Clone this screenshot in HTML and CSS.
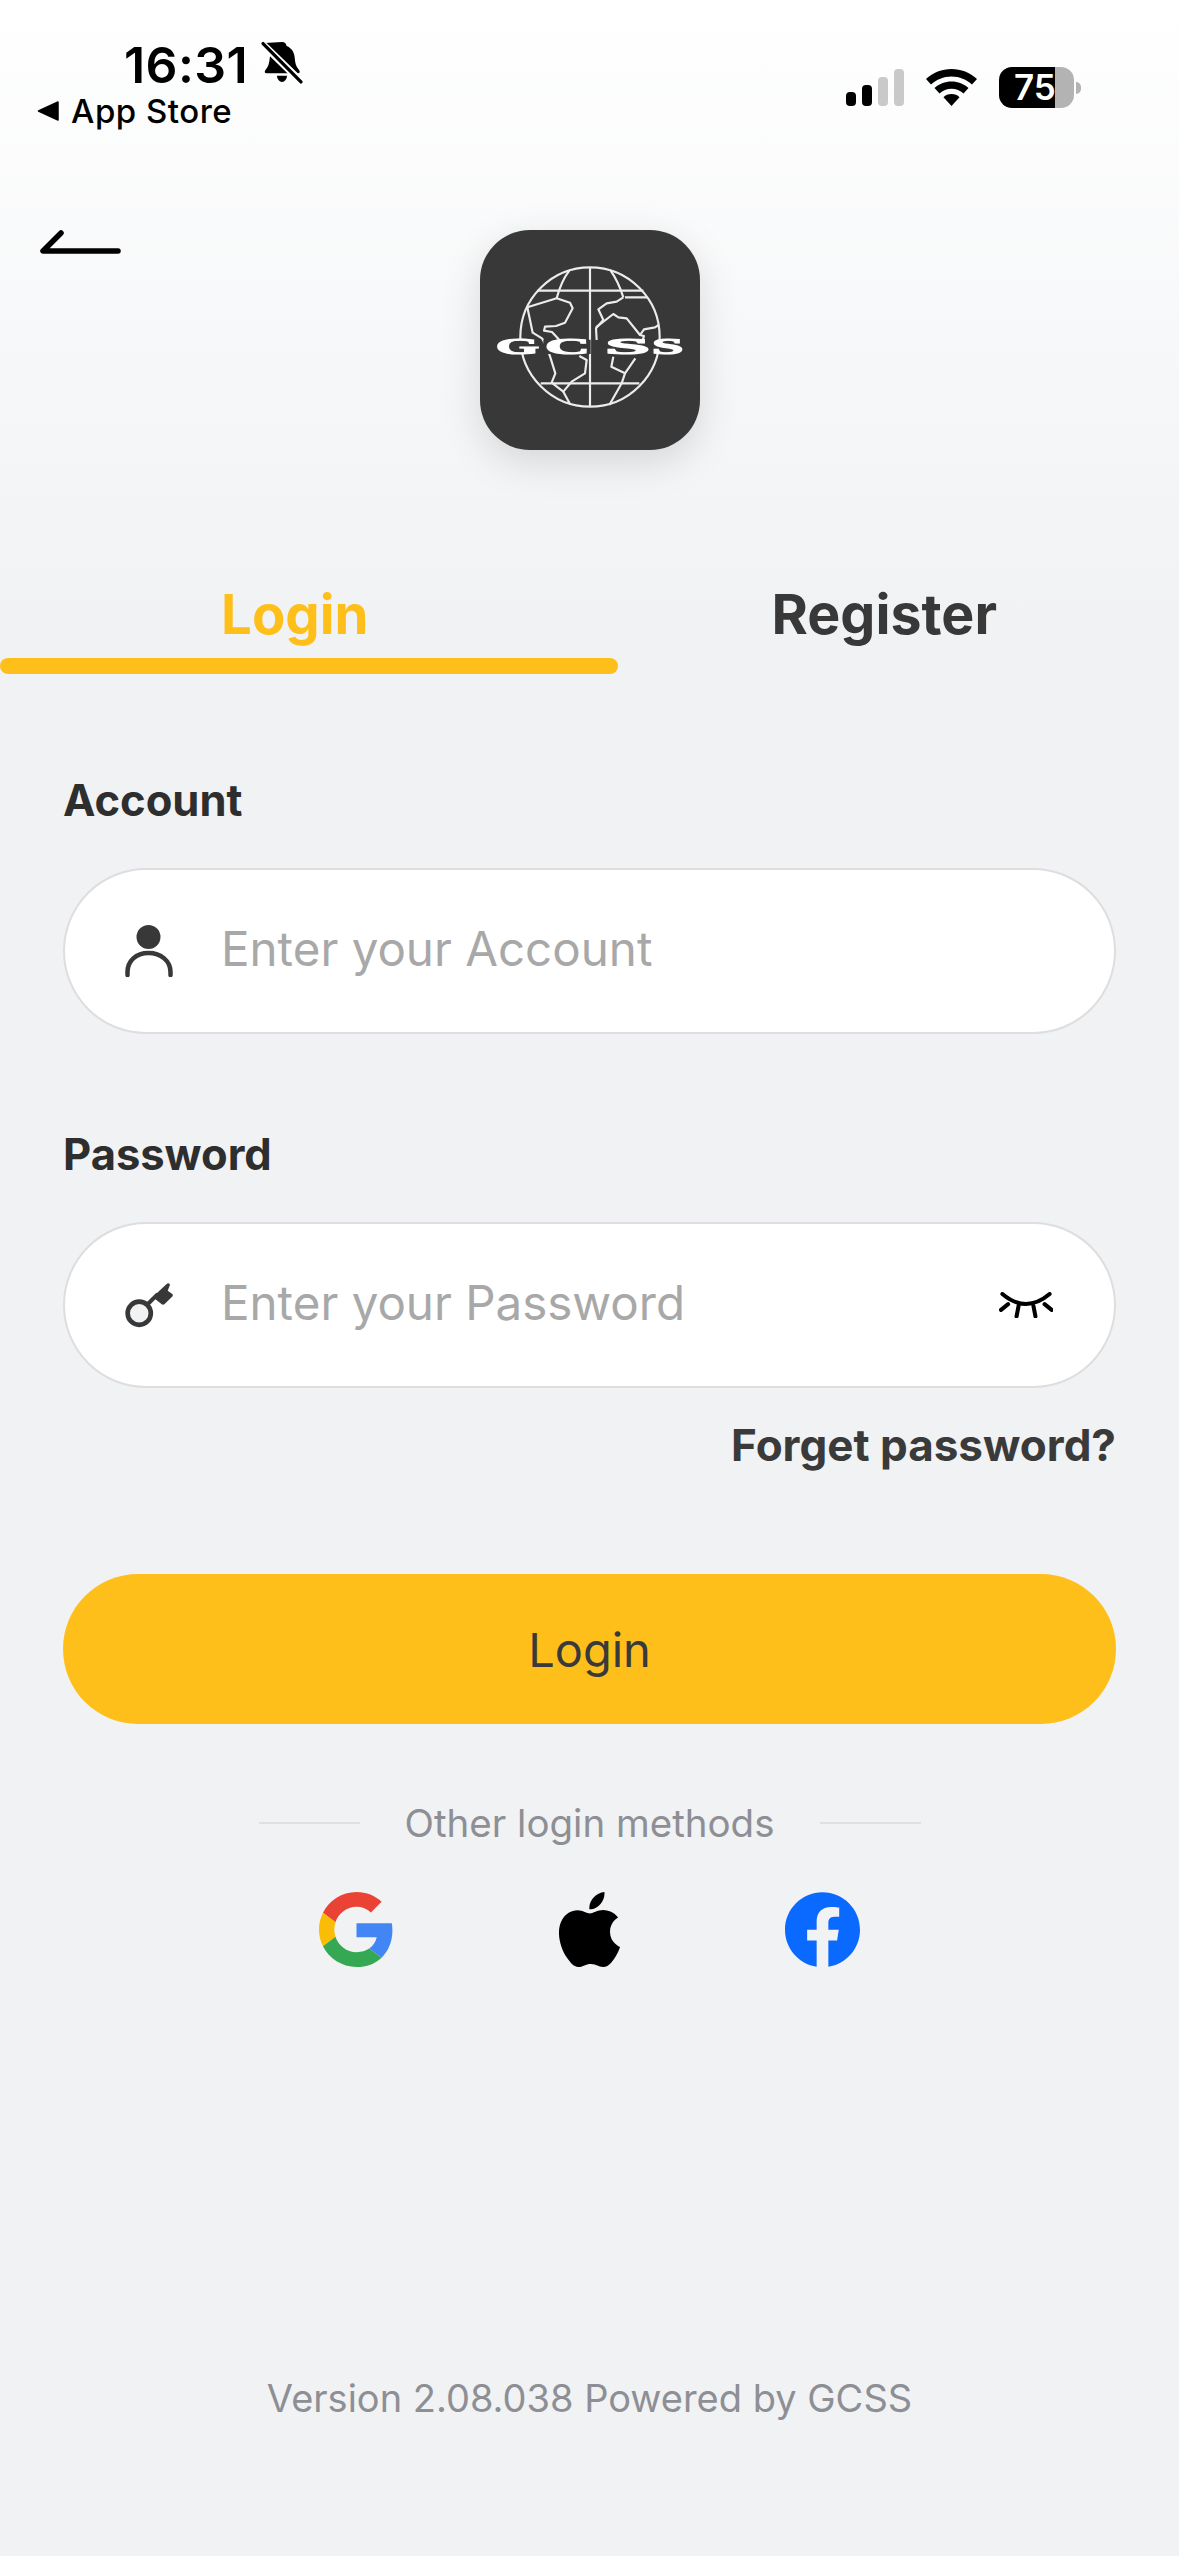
FILE: index.html
```html
<!DOCTYPE html>
<html lang="en">
<head>
<meta charset="utf-8">
<title>GCSS Login</title>
<link rel="stylesheet" href="styles.css">
</head>
<body>
<div class="page">
  <header class="status">
    <div class="status-left">
      <div class="time-row">
        <span class="time">16:31</span>
        <svg class="bell" viewBox="0 0 40 42"><path d="M20 1c2.500 0 4 1.500 4.500 4 5 2 7.500 6 8 12 .3 5 1.500 8 4 11 1.500 2 1 3.500-1 3.500H5c-2 0-2.500-1.500-1-3.500 2.500-3 3.500-6 4-11 .3-3 1-5.500 2.500-7.500L3 2" fill="#000"/><path d="M15 34h10c-.5 4-2.500 6-5 6s-4.500-2-5-6z" fill="#000"/><path d="M1 3 38 39" stroke="#fff" stroke-width="7"/><path d="M1.500 2.500 38.500 40" stroke="#000" stroke-width="3.200" stroke-linecap="round"/></svg>
      </div>
      <div class="back-app">
        <svg class="tri" viewBox="0 0 22 22"><path d="M21 2v18L1.500 11z" fill="#000" stroke="#000" stroke-width="1.500" stroke-linejoin="round"/></svg>
        <span>App Store</span>
      </div>
    </div>
    <div class="status-right">
      <div class="signal"><i class="b1"></i><i class="b2"></i><i class="b3"></i><i class="b4"></i></div>
      <svg class="wifi" viewBox="0 0 51 37"><path d="M25.500 0C35 0 44 3.500 51 10l-5 5.500C40.500 10.500 33.500 7.500 25.500 7.500S10.500 10.500 5 15.500L0 10C7 3.500 16 0 25.500 0z" fill="#000"/><path d="M25.500 12.500c6.500 0 12.500 2.500 17 6.500l-5 5.500c-3.200-3-7.500-4.700-12-4.700s-8.800 1.700-12 4.700l-5-5.500c4.500-4 10.500-6.500 17-6.500z" fill="#000"/><path d="M25.500 25c3.200 0 6 1.200 8 3.200L25.500 37l-8-8.800c2-2 4.800-3.200 8-3.200z" fill="#000"/></svg>
      <div class="battery"><div class="cell"><span class="pct">75</span></div><i class="nub"></i></div>
    </div>
  </header>

  <section class="hero">
    <button class="back" aria-label="Back">
      <svg viewBox="0 0 82 25"><path d="M22 3 4 21h75" fill="none" stroke="#000" stroke-width="5.500" stroke-linecap="round" stroke-linejoin="round"/></svg>
    </button>
    <div class="logo">
      <svg viewBox="90 60 660 660">
        <defs><filter id="soft" x="-5%" y="-30%" width="110%" height="160%"><feGaussianBlur stdDeviation="1.600"/></filter></defs>
        <g fill="none" stroke="#ececec" stroke-width="6.500" stroke-linejoin="round">
          <circle cx="420" cy="381" r="209"/>
          <path d="M420 172V590M262 242H580M272 520H568"/>
          <path d="M358 182C340 205 328 235 320 265M482 182C498 205 510 230 520 262"/>
          <path d="M232 292 320 265 360 278 368 295 345 338 318 348 285 350 282 362 306 366 342 405"/>
          <path d="M232 292 248 368 276 385 292 415 302 445 316 490 305 518 340 545 365 515 405 490 410 450 388 438"/>
          <path d="M340 545 360 582M525 262H592M520 262 500 275 470 280 445 298 460 330 438 355 440 390"/>
          <path d="M438 352 490 312 505 322 530 325 570 375 582 358 615 352 626 345M570 375 582 378 575 400"/>
          <path d="M490 440 484 470 525 490 556 445M525 490 515 520 478 585"/>
        </g>
        <path fill="#383838" d="M133 389H268V432H133zM280 389H422V432H280zM462 389H602V432H462zM604 389H702V432H604z"/>
        <g class="logo-text" filter="url(#soft)">
          <text x="137" y="433" textLength="130" lengthAdjust="spacingAndGlyphs">G</text>
          <text x="285" y="433" textLength="135" lengthAdjust="spacingAndGlyphs">C</text>
          <text x="466" y="433" textLength="134" lengthAdjust="spacingAndGlyphs">S</text>
          <text x="606" y="433" textLength="94" lengthAdjust="spacingAndGlyphs">S</text>
        </g>
      </svg>
    </div>
    <span></span>
  </section>

  <nav class="tabs">
    <span class="tab active">Login</span>
    <span class="tab">Register</span>
  </nav>
  <div class="tab-bar"></div>

  <main class="form">
    <label class="label">Account</label>
    <div class="field">
      <svg class="ficon" viewBox="0 0 48 52"><ellipse cx="23.500" cy="12" rx="12" ry="12" fill="#383838"/><path d="M2.500 50V47C2.500 36 11 28 23.500 28S45.500 36 45.500 47V50" fill="none" stroke="#383838" stroke-width="4.500" stroke-linecap="round"/></svg>
      <span class="ph">Enter your Account</span>
    </div>
    <label class="label second">Password</label>
    <div class="field">
      <svg class="ficon" viewBox="193 248 145 134"><circle cx="236" cy="340" r="35" fill="#f0f2f4" stroke="#383838" stroke-width="14"/><path d="M262 312 292 282" stroke="#383838" stroke-width="12"/><path d="M280 288 318 252q8-6 11 2l-7 18 14 10q3 3 0 7l-24 24q-4 3-8 0l-22-18z" fill="#383838"/></svg>
      <span class="ph">Enter your Password</span>
      <svg class="eye" viewBox="900 185 160 77"><path d="M910 191Q980 250 1050 191" fill="none" stroke="#000" stroke-width="12" stroke-linecap="round"/><path d="M927 221 906 238M1035 221 1056 238M958 226 952 257M1002 226 1008 257" fill="none" stroke="#000" stroke-width="12" stroke-linecap="round"/></svg>
    </div>
    <div class="forgot">Forget password?</div>
    <button class="submit">Login</button>
    <div class="other"><i></i><span>Other login methods</span><i></i></div>
    <div class="social">
      <svg class="soc" viewBox="0 0 48 48"><path fill="#EA4335" d="M24 9.500c3.540 0 6.710 1.220 9.210 3.600l6.850-6.850C35.900 2.380 30.470 0 24 0 14.620 0 6.510 5.380 2.560 13.220l7.980 6.190C12.430 13.720 17.740 9.500 24 9.500z"/><path fill="#4285F4" d="M46.980 24.550c0-1.570-.15-3.090-.38-4.550H24v9.020h12.940c-.58 2.960-2.260 5.480-4.780 7.180l7.730 6c4.510-4.180 7.090-10.360 7.090-17.650z"/><path fill="#FBBC05" d="M10.530 28.590c-.48-1.450-.76-2.990-.76-4.590s.27-3.140.76-4.590l-7.980-6.190C.92 16.460 0 20.120 0 24c0 3.880.92 7.540 2.560 10.780l7.970-6.190z"/><path fill="#34A853" d="M24 48c6.480 0 11.930-2.130 15.890-5.810l-7.730-6c-2.150 1.450-4.920 2.300-8.160 2.300-6.260 0-11.570-4.220-13.470-9.910l-7.980 6.190C6.510 42.620 14.620 48 24 48z"/></svg>
      <svg class="soc" viewBox="0 0 24 24"><path fill="#000" d="M12.152 6.896c-.948 0-2.415-1.078-3.960-1.040-2.040.027-3.910 1.183-4.961 3.014-2.117 3.675-.546 9.103 1.519 12.090 1.013 1.454 2.208 3.090 3.792 3.039 1.520-.065 2.090-.987 3.935-.987 1.831 0 2.350.987 3.960.948 1.637-.026 2.676-1.480 3.676-2.948 1.156-1.688 1.636-3.325 1.662-3.415-.039-.013-3.182-1.221-3.220-4.857-.026-3.040 2.480-4.494 2.597-4.559-1.429-2.090-3.623-2.324-4.390-2.376-2-.156-3.675 1.090-4.610 1.090zM15.530 3.830c.843-1.012 1.400-2.427 1.245-3.830-1.207.052-2.662.805-3.532 1.818-.78.896-1.454 2.338-1.273 3.714 1.338.104 2.715-.688 3.559-1.701"/></svg>
      <svg class="soc" viewBox="0 0 24 24"><path fill="#0A69FF" d="M24 12.073c0-6.627-5.373-12-12-12s-12 5.373-12 12c0 5.990 4.388 10.954 10.125 11.854v-8.385H7.078v-3.470h3.047V9.430c0-3.007 1.792-4.669 4.533-4.669 1.312 0 2.686.235 2.686.235v2.953H15.830c-1.491 0-1.956.925-1.956 1.874v2.250h3.328l-.532 3.470h-2.796v8.385C19.612 23.027 24 18.062 24 12.073z"/></svg>
    </div>
    <div class="version">Version 2.08.038 Powered by GCSS</div>
  </main>
</div>
</body>
</html>
```
FILE: styles.css
```css
* { box-sizing: border-box; }
html, body { margin: 0; padding: 0; }
body { font-family: Inter, "Liberation Sans", sans-serif; background: #f0f2f4; }
.page {
  width: 1179px;
  height: 2556px;
  overflow: hidden;
  display: flex;
  flex-direction: column;
  background: linear-gradient(180deg, #ffffff 0, #f0f2f4 620px);
}

/* status bar */
.status { height: 230px; display: flex; justify-content: space-between; padding: 37px 98px 0 38px; }
.time-row { display: flex; align-items: center; margin-left: 86px; height: 56px; }
.time { font-size: 50px; line-height: 56px; font-weight: 600; color: #000; letter-spacing: 0.4px; }
.bell { width: 42px; height: 43px; margin-left: 13px; margin-top: -5px; }
.back-app { display: flex; align-items: center; margin-top: -2px; height: 40px; color: #000; font-size: 33px; font-weight: 500; letter-spacing: 0.5px; }
.tri { width: 22px; height: 22px; margin-right: 12px; margin-left: -1px; }
.status-right { display: flex; align-items: center; height: 41px; margin-top: 30px; }
.signal { display: flex; align-items: flex-end; gap: 6px; height: 37px; }
.signal i { width: 10px; border-radius: 4px; background: #000; }
.signal .b1 { height: 14px; }
.signal .b2 { height: 21px; }
.signal .b3 { height: 29px; background: #c9c9c9; }
.signal .b4 { height: 37px; background: #c9c9c9; }
.wifi { width: 51px; height: 37px; margin-left: 22px; }
.battery { display: flex; align-items: center; margin-left: 22px; }
.cell { width: 75px; height: 41px; border-radius: 13px; background: linear-gradient(90deg, #000 56px, #b3b3b3 56px); display: flex; align-items: center; padding-left: 15px; }
.pct { color: #fff; font-size: 35px; font-weight: 600; line-height: 41px; }
.nub { width: 5px; height: 12px; margin-left: 2px; border-radius: 0 6px 6px 0; background: #b3b3b3; }

/* logo row */
.hero { display: grid; grid-template-columns: 1fr 220px 1fr; height: 220px; }
.back { width: 82px; height: 25px; margin-left: 39px; padding: 0; border: 0; background: none; }
.back svg { display: block; width: 82px; height: 25px; }
.logo { width: 220px; height: 220px; border-radius: 50px; background: #383838; box-shadow: 0 12px 40px rgba(0, 0, 0, 0.13); }
.logo svg { display: block; width: 220px; height: 220px; }
.logo-text { font-family: "Liberation Serif", serif; font-weight: 700; font-size: 70px; fill: #fff; stroke: #fff; stroke-width: 3.500px; }

/* tabs */
.tabs { display: grid; grid-template-columns: 1fr 1fr; margin-top: 130px; }
.tab { text-align: center; font-size: 55.500px; line-height: 68px; font-weight: 700; color: #383838; }
.tab.active { color: #ffbf1b; font-size: 54.500px; }
.tab-bar { width: 618px; height: 16px; margin-top: 10px; border-radius: 8px; background: #ffbf1b; }

/* form */
.form { display: flex; flex-direction: column; padding: 0 63px; }
.label { display: block; margin-top: 100px; font-size: 43.500px; line-height: 52px; font-weight: 700; color: #2e2e2e; }
.label.second { margin-top: 94px; }
.field { display: flex; align-items: center; height: 166px; margin-top: 42px; padding: 0 61px 0 60px; background: #fff; border: 2px solid #dedee0; border-radius: 83px; }
.ficon { width: 48px; height: 52px; flex: none; }
.ph { flex: 1; margin-left: 48px; padding-bottom: 5px; font-size: 47.500px; color: #a8a8a8; line-height: 60px; }
.eye { width: 54px; height: 26px; flex: none; }
.forgot { margin-top: 31px; text-align: right; font-size: 44px; line-height: 52px; font-weight: 700; color: #3a3a3a; }
.submit { height: 150px; margin-top: 103px; border: 0; border-radius: 75px; background: #ffbf1b; color: #3a3a3a; font-family: inherit; font-size: 47px; font-weight: 400; }
.other { display: flex; align-items: center; justify-content: center; gap: 45px; height: 48px; margin-top: 75px; color: #8e8f94; font-size: 38.500px; }
.other i { width: 101px; height: 2px; background: #dfe0e6; }
.social { display: flex; justify-content: center; gap: 158px; margin-top: 45px; }
.soc { width: 75px; height: 75px; }
.version { margin-top: 407px; text-align: center; color: #8e8f94; font-size: 38px; line-height: 48px; }
```
